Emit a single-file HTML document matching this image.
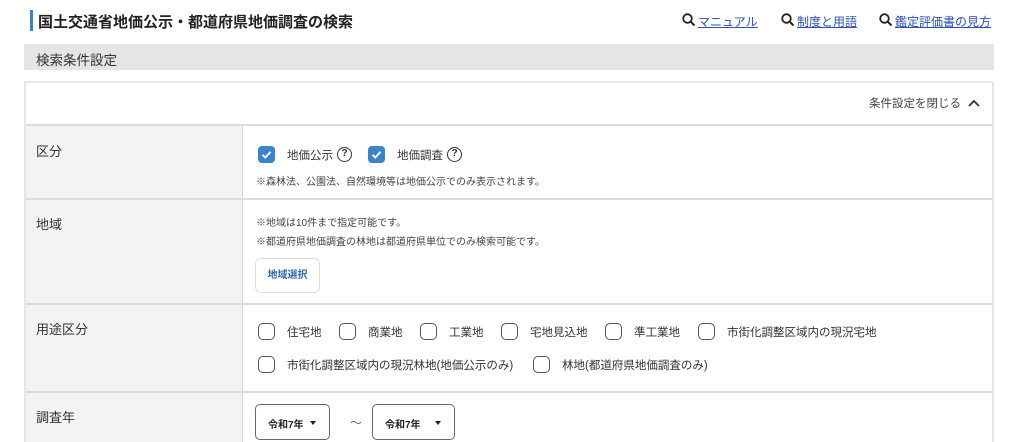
<!DOCTYPE html><html><head><meta charset="utf-8"><style>
*{margin:0;padding:0;box-sizing:border-box}
html,body{width:1024px;height:442px;overflow:hidden}
body{background:#fff;font-family:"Liberation Sans","Noto Sans CJK JP",sans-serif;color:#333;position:relative}
.a{position:absolute;white-space:nowrap}
.t{font-size:15px;font-weight:bold;color:#222}
.lk{font-size:12px;color:#2c4fb7;text-decoration:underline}
.lab{font-size:13px;color:#333}
.n{font-size:10px;color:#444}
.cb{position:absolute;width:17px;height:17px;border-radius:4px;background:#3a84c9}
.ub{position:absolute;width:17px;height:17px;border-radius:5px;border:1.3px solid #555;background:#fff}
.ct{font-size:11.5px;color:#333}
.q{position:absolute;width:15px;height:15px;border:1.4px solid #333;border-radius:50%;font-size:10px;line-height:12px;text-align:center;font-weight:bold}
.sel{position:absolute;height:36px;border:1px solid #666;border-radius:5px;background:#fff;font-size:10px;font-weight:bold;color:#222;padding:11px 0 0 12px}
.sel:after{content:"";position:absolute;right:13px;top:16px;border:3.5px solid transparent;border-top:4px solid #222}
</style></head><body>
<div class="a" style="left:30px;top:10px;width:3px;height:21px;background:#3a84c9"></div>
<div class="a t" style="left:38px;top:11px">国土交通省地価公示・都道府県地価調査の検索</div>
<svg class="a" style="left:682px;top:13px" width="14" height="14" viewBox="0 0 14 14"><circle cx="5.5" cy="5.5" r="4.3" fill="none" stroke="#222" stroke-width="1.8"/><path d="M8.7 8.7L12.5 12.5" stroke="#222" stroke-width="2"/></svg>
<div class="a lk" style="left:698px;top:13px">マニュアル</div>
<svg class="a" style="left:781px;top:13px" width="14" height="14" viewBox="0 0 14 14"><circle cx="5.5" cy="5.5" r="4.3" fill="none" stroke="#222" stroke-width="1.8"/><path d="M8.7 8.7L12.5 12.5" stroke="#222" stroke-width="2"/></svg>
<div class="a lk" style="left:797px;top:13px">制度と用語</div>
<svg class="a" style="left:879px;top:13px" width="14" height="14" viewBox="0 0 14 14"><circle cx="5.5" cy="5.5" r="4.3" fill="none" stroke="#222" stroke-width="1.8"/><path d="M8.7 8.7L12.5 12.5" stroke="#222" stroke-width="2"/></svg>
<div class="a lk" style="left:895px;top:13px">鑑定評価書の見方</div>
<div class="a" style="left:24px;top:44px;width:970px;height:26px;background:#e4e5e5"></div>
<div class="a lab" style="left:36px;top:49px;font-size:13.5px">検索条件設定</div>
<div class="a" style="left:24px;top:81px;width:970px;height:370px;border:2px solid #e6e6e6;border-bottom:none"></div>
<div class="a" style="left:26px;top:125px;width:217px;height:330px;background:#f3f3f3"></div>
<div class="a" style="left:242px;top:125px;width:1px;height:330px;background:#d6d6d6"></div>
<div class="a" style="left:26px;top:124px;width:966px;height:2px;background:#dcdcdc"></div>
<div class="a" style="left:26px;top:198px;width:966px;height:2px;background:#dcdcdc"></div>
<div class="a" style="left:26px;top:303px;width:966px;height:2px;background:#dcdcdc"></div>
<div class="a" style="left:26px;top:391px;width:966px;height:2px;background:#dcdcdc"></div>
<div class="a" style="left:869px;top:95px;font-size:11.5px;color:#444">条件設定を閉じる</div>
<svg class="a" style="left:967px;top:97px" width="14" height="12" viewBox="0 0 14 12"><path d="M2 9L7 4L12 9" fill="none" stroke="#333" stroke-width="1.8"/></svg>
<div class="a lab" style="left:36px;top:141px">区分</div>
<div class="a lab" style="left:36px;top:214px">地域</div>
<div class="a lab" style="left:36px;top:319px">用途区分</div>
<div class="a lab" style="left:36px;top:407px">調査年</div>
<div class="cb" style="left:258px;top:146px"><svg width="17" height="17"><path d="M4.5 8.8L7.3 11.5L12.5 5.8" fill="none" stroke="#fff" stroke-width="2"/></svg></div>
<div class="a ct" style="left:287px;top:147px">地価公示</div><div class="q" style="left:337px;top:147px">?</div>
<div class="cb" style="left:368px;top:146px"><svg width="17" height="17"><path d="M4.5 8.8L7.3 11.5L12.5 5.8" fill="none" stroke="#fff" stroke-width="2"/></svg></div>
<div class="a ct" style="left:397px;top:147px">地価調査</div><div class="q" style="left:447px;top:147px">?</div>
<div class="a n" style="left:256px;top:173px">※森林法、公園法、自然環境等は地価公示でのみ表示されます。</div>
<div class="a n" style="left:256px;top:214px">※地域は10件まで指定可能です。</div>
<div class="a n" style="left:256px;top:233px">※都道府県地価調査の林地は都道府県単位でのみ検索可能です。</div>
<div class="a" style="left:255px;top:258px;width:65px;height:35px;border:1px solid #ddd;border-radius:6px;font-size:10px;color:#2e6bb3;font-weight:bold;text-align:center;line-height:33px">地域選択</div>
<div class="ub" style="left:258px;top:323px"></div><div class="a ct" style="left:287px;top:324px">住宅地</div>
<div class="ub" style="left:339px;top:323px"></div><div class="a ct" style="left:368px;top:324px">商業地</div>
<div class="ub" style="left:420px;top:323px"></div><div class="a ct" style="left:449px;top:324px">工業地</div>
<div class="ub" style="left:501px;top:323px"></div><div class="a ct" style="left:530px;top:324px">宅地見込地</div>
<div class="ub" style="left:605px;top:323px"></div><div class="a ct" style="left:634px;top:324px">準工業地</div>
<div class="ub" style="left:698px;top:323px"></div><div class="a ct" style="left:727px;top:324px">市街化調整区域内の現況宅地</div>
<div class="ub" style="left:258px;top:356px"></div><div class="a ct" style="left:287px;top:357px">市街化調整区域内の現況林地(地価公示のみ)</div>
<div class="ub" style="left:533px;top:356px"></div><div class="a ct" style="left:562px;top:357px">林地(都道府県地価調査のみ)</div>
<div class="sel" style="left:255px;top:404px;width:75px">令和7年</div>
<div class="a" style="left:350px;top:414px;font-size:12px;color:#666">～</div>
<div class="sel" style="left:372px;top:404px;width:83px">令和7年</div>
</body></html>
